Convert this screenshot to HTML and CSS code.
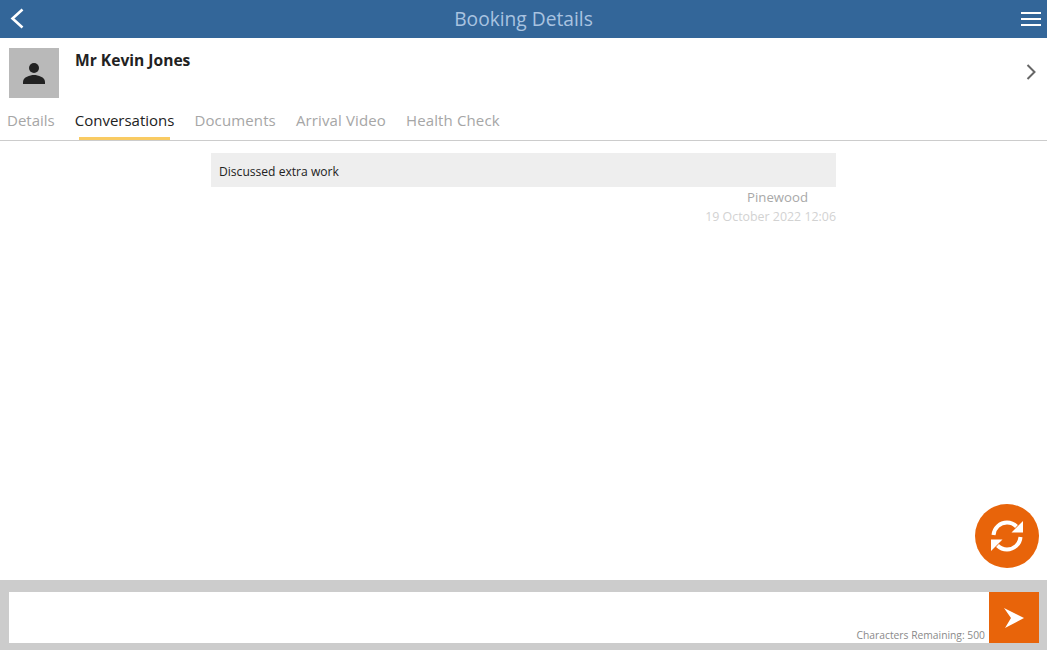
FILE: index.html
```html
<!DOCTYPE html>
<html lang="en">
<head>
<meta charset="utf-8">
<title>Booking Details</title>
<link rel="stylesheet" href="styles.css">
</head>
<body>
<div class="app">
  <header class="topbar">
    <svg class="back" width="14" height="22" viewBox="0 0 14 22"><path d="M12.500 1.500 2.500 10.500 12.500 19.500" fill="none" stroke="#fff" stroke-width="2.600"/></svg>
    <h1 class="title">Booking Details</h1>
    <div class="burger"><span></span><span></span><span></span></div>
  </header>
  <section class="profile">
    <div class="avatar">
      <svg width="24" height="24" viewBox="0 0 24 24"><circle cx="12" cy="7" r="5" fill="#222"/><path d="M1 23v-2c0-5 7-7 11-7s11 2 11 7v2z" fill="#222"/></svg>
    </div>
    <div class="name">Mr Kevin Jones</div>
    <svg class="chev" width="10" height="16" viewBox="0 0 10 16"><path d="M1.500 1 8.500 8 1.500 15" fill="none" stroke="#666" stroke-width="2"/></svg>
  </section>
  <nav class="tabs">
    <a class="tab">Details</a>
    <a class="tab active">Conversations</a>
    <a class="tab">Documents</a>
    <a class="tab">Arrival Video</a>
    <a class="tab">Health Check</a>
  </nav>
  <main class="messages">
    <div class="thread">
      <div class="bubble">Discussed extra work</div>
      <div class="sender">Pinewood</div>
      <div class="stamp">19 October 2022 12:06</div>
    </div>
    <button class="refresh" aria-label="Refresh">
      <svg width="32" height="32" viewBox="0 0 32 32">
        <path d="M2.500 15C3 8 9 2.500 16 2.500c3.800 0 7 1.500 9.500 4" fill="none" stroke="#fff" stroke-width="4"/>
        <path d="M32 1V12.500H20.500z" fill="#fff"/>
        <path d="M29.500 17C29 24 23 29.500 16 29.500c-3.800 0-7-1.500-9.500-4" fill="none" stroke="#fff" stroke-width="4"/>
        <path d="M0 31V19.500H11.500z" fill="#fff"/>
      </svg>
    </button>
  </main>
  <footer class="composer">
    <div class="field"><span class="remaining">Characters Remaining: 500</span></div>
    <button class="send" aria-label="Send">
      <svg width="20" height="20" viewBox="0 0 20 20"><path d="M0 0 20 10 1 20 7 10z" fill="#fff"/></svg>
    </button>
  </footer>
</div>
</body>
</html>
```
FILE: styles.css
```css
* { box-sizing: border-box; }
html, body { margin: 0; height: 100%; background: #fff; }
body { font-family: "Open Sans", "Noto Sans", sans-serif; overflow: hidden; }
.app { width: 1047px; height: 650px; display: flex; flex-direction: column; }

.topbar { height: 38px; flex: none; background: #336699; display: flex; align-items: center; justify-content: space-between; padding: 0 6px 0 10px; position: relative; }
.back { display: block; margin-top: -1px; }
.title { position: absolute; left: 0; right: 0; margin: 0; text-align: center; font-size: 19.2px; font-weight: 400; color: #a9c3e0; line-height: 38px; }
.burger { width: 20px; display: flex; flex-direction: column; gap: 4px; margin-top: -1px; }
.burger span { display: block; height: 2px; background: #fff; }

.profile { height: 60px; flex: none; display: flex; align-items: flex-start; padding: 10px 8px 0 9px; }
.avatar { width: 50px; height: 50px; background: #b9b9b9; display: flex; align-items: center; justify-content: center; }
.name { margin-left: 16px; font-size: 15.6px; font-weight: 700; color: #222; line-height: 25px; flex: 1; }
.chev { margin-top: 16px; margin-right: 3px; }

.tabs { height: 43px; flex: none; display: flex; align-items: flex-start; border-bottom: 1px solid #ccc; padding-left: 7px; gap: 20px; }
.tab { position: relative; font-size: 15px; color: #a6a6a6; line-height: 24px; padding-top: 10px; height: 42px; }
.tab.active { color: #222; }
.tab.active ~ .tab { letter-spacing: .13px; }
.tab.active::after { content: ""; position: absolute; left: 4px; right: 4px; bottom: 0; height: 3px; background: #f9cb63; }

.messages { flex: 1; position: relative; display: flex; justify-content: center; padding-top: 12px; }
.thread { width: 625px; }
.bubble { height: 34px; background: #eeeeee; padding-left: 8px; font-size: 12.1px; line-height: 37px; color: #222; }
.sender { text-align: right; padding-right: 28px; font-size: 13.2px; line-height: 20px; color: #a8a8a8; }
.stamp { text-align: right; font-size: 12.4px; line-height: 18px; color: #d2d2d2; margin-top: 1px; }
.refresh { position: absolute; right: 8px; bottom: 12px; width: 64px; height: 64px; border: 0; padding: 0; border-radius: 50%; background: #e8640a; display: flex; align-items: center; justify-content: center; }

.composer { height: 70px; flex: none; background: #cccccc; display: flex; padding: 12px 8px 7px 9px; }
.field { flex: 1; background: #fff; display: flex; align-items: flex-end; justify-content: flex-end; padding-right: 4px; }
.remaining { font-size: 10.3px; line-height: 15px; color: #8a8a8a; }
.send { width: 50px; border: 0; padding: 0; background: #e8640a; display: flex; align-items: center; justify-content: center; }
```
